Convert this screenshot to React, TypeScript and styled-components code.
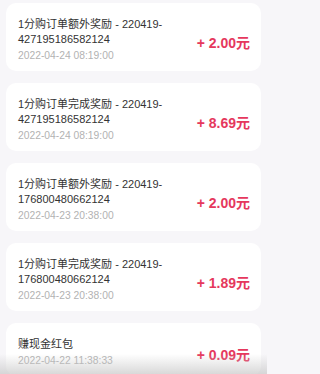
import styled, { createGlobalStyle } from "styled-components";

const GlobalStyle = createGlobalStyle`
  html, body {
    margin: 0;
    padding: 0;
    background: #f7f6f9;
  }
  body {
    font-family: "Liberation Sans", "Noto Sans CJK SC", sans-serif;
  }
`;

const Page = styled.div`
  width: 267px;
  height: 374px;
  overflow: hidden;
  position: relative;
  padding: 3px 6px 0;
  box-sizing: border-box;
  display: flex;
  flex-direction: column;
  gap: 12px;
`;

const Card = styled.div`
  flex-shrink: 0;
  background: #ffffff;
  border-radius: 10px;
  padding: 14px 11px 8px 12px;
  display: flex;
  align-items: center;
  justify-content: space-between;
`;

const Info = styled.div`
  width: 160px;
  display: flex;
  flex-direction: column;
`;

const Title = styled.div`
  font-size: 11px;
  line-height: 15px;
  color: #333333;
`;

const Time = styled.div`
  margin-top: 1px;
  font-size: 10.3px;
  line-height: 15px;
  color: #b2b2b2;
`;

const Amount = styled.div`
  margin-top: 3px;
  font-size: 14px;
  font-weight: bold;
  color: #e5385d;
  white-space: nowrap;
`;

const BottomShade = styled.div`
  position: absolute;
  left: 0;
  right: 0;
  bottom: 0;
  height: 20px;
  pointer-events: none;
  background: linear-gradient(to bottom, rgba(200, 200, 200, 0), rgba(200, 200, 200, 0.7));
`;

interface IRecord {
  id: number;
  title: string;
  time: string;
  amount: string;
}

const records: IRecord[] = [
  {
    id: 1,
    title: "1分购订单额外奖励 - 220419-\u200B427195186582124",
    time: "2022-04-24 08:19:00",
    amount: "2.00",
  },
  {
    id: 2,
    title: "1分购订单完成奖励 - 220419-\u200B427195186582124",
    time: "2022-04-24 08:19:00",
    amount: "8.69",
  },
  {
    id: 3,
    title: "1分购订单额外奖励 - 220419-\u200B176800480662124",
    time: "2022-04-23 20:38:00",
    amount: "2.00",
  },
  {
    id: 4,
    title: "1分购订单完成奖励 - 220419-\u200B176800480662124",
    time: "2022-04-23 20:38:00",
    amount: "1.89",
  },
  {
    id: 5,
    title: "赚现金红包",
    time: "2022-04-22 11:38:33",
    amount: "0.09",
  },
];

function App() {
  return (
    <>
      <GlobalStyle />
      <Page>
        {records.map((r) => (
          <Card key={r.id}>
            <Info>
              <Title>{r.title}</Title>
              <Time>{r.time}</Time>
            </Info>
            <Amount>+ {r.amount}元</Amount>
          </Card>
        ))}
        <BottomShade />
      </Page>
    </>
  );
}

export default App;
